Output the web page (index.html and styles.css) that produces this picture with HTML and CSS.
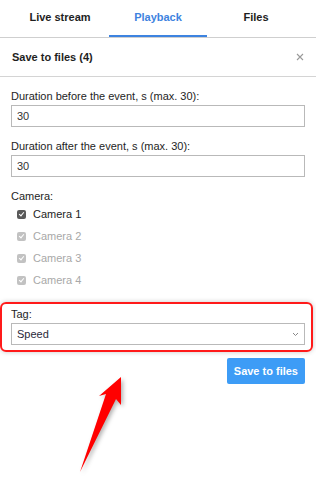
FILE: index.html
```html
<!DOCTYPE html>
<html>
    <head>
        <title>Save to files</title>
        <link rel="stylesheet" href="styles.css">
    </head>
    <body>
        <div class="tabs">
            <a class="tab">Live stream</a>
            <a class="tab tab-active">Playback</a>
            <a class="tab">Files</a>
        </div>

        <div class="panel-head">
            <span class="panel-title">Save to files (4)</span>
            <svg class="close" width="8" height="8" viewBox="0 0 8 8"><path d="M1 1L7 7M7 1L1 7" stroke="#9a9a9a" stroke-width="1.1"/></svg>
        </div>

        <div class="form">
            <div class="field">
                <label class="lbl">Duration before the event, s (max. 30):</label>
                <input class="txt" type="text" value="30">
            </div>
            <div class="field">
                <label class="lbl">Duration after the event, s (max. 30):</label>
                <input class="txt" type="text" value="30">
            </div>
            <div class="field">
                <label class="lbl">Camera:</label>
                <div class="cam"><span class="chk"></span>Camera 1</div>
                <div class="cam cam-off"><span class="chk"></span>Camera 2</div>
                <div class="cam cam-off"><span class="chk"></span>Camera 3</div>
                <div class="cam cam-off"><span class="chk"></span>Camera 4</div>
            </div>

            <div class="mark">
                <label class="lbl">Tag:</label>
                <div class="sel-wrap">
                    <select class="sel"><option>Speed</option></select>
                    <svg class="chev" width="7" height="5" viewBox="0 0 7 5"><path d="M1 1L3.5 3.5L6 1" fill="none" stroke="#888" stroke-width="1"/></svg>
                </div>
            </div>

            <div class="actions">
                <button class="save-btn">Save to files</button>
            </div>
        </div>

        <!-- annotation arrow -->
        <svg class="arrow" width="316" height="504" viewBox="0 0 316 504">
            <polygon points="121,377 121,405 116,399 80,472 106,394 99,396" fill="#ff0000"/>
        </svg>
    </body>
</html>
```

FILE: styles.css
```css
body{
    margin: 0;
    width: 316px;
    height: 504px;
    background: #fff;
    font-family: "Liberation Sans", Arial, sans-serif;
    font-size: 11px;
    color: #1e1e1e;
    position: relative;
    overflow: hidden;
}
.tabs{
    display: flex;
    padding: 0 11px;
    border-bottom: 1px solid #cfcfcf;
}
.tab{
    flex: 1;
    text-align: center;
    font-weight: bold;
    line-height: 35px;
    border-bottom: 2px solid transparent;
    color: #1e1e1e;
}
.tab-active{
    color: #3d83e0;
    border-bottom-color: #3d83e0;
}
.panel-head{
    display: flex;
    align-items: center;
    justify-content: space-between;
    height: 38px;
    padding: 0 11px 0 12px;
    border-bottom: 1px solid #d4d4d4;
}
.panel-title{
    font-weight: bold;
}
.close{
    display: block;
    margin-right: 1px;
}
.form{
    padding: 0 11px;
}
.field{
    margin-top: 12px;
}
.lbl{
    display: block;
    line-height: 14px;
    margin-bottom: 2px;
}
.txt{
    display: block;
    box-sizing: border-box;
    width: 100%;
    height: 22px;
    margin: 0;
    border: 1px solid #b9b9b9;
    padding: 0 5px;
    font-family: inherit;
    font-size: 11px;
    color: #333;
    outline: none;
}
.cam{
    display: flex;
    align-items: center;
    height: 22px;
    padding-left: 6px;
}
.cam:first-of-type{
    margin-top: -2px;
}
.chk{
    width: 9px;
    height: 9px;
    border-radius: 2px;
    background: #5a5a5a;
    margin-right: 7px;
    position: relative;
}
.chk::after{
    content: "";
    position: absolute;
    left: 3px;
    top: 1px;
    width: 2px;
    height: 4px;
    border: solid #fff;
    border-width: 0 1px 1px 0;
    transform: rotate(40deg);
}
.cam-off{
    color: #a8a8a8;
}
.cam-off .chk{
    background: #c2c2c2;
}
.mark{
    margin: 11px -8px 0 -11px;
    padding: 3px 6px 5px 9px;
    border: 2px solid #ff1a1a;
    border-radius: 6px;
    box-shadow: 0 0 5px rgba(0,0,0,0.22);
}
.sel-wrap{
    position: relative;
}
.sel{
    display: block;
    box-sizing: border-box;
    width: 100%;
    height: 22px;
    margin: 0;
    border: 1px solid #b9b9b9;
    border-radius: 0;
    background: #fff;
    padding: 0 5px;
    font-family: inherit;
    font-size: 11px;
    color: #2a2a3a;
    -webkit-appearance: none;
    appearance: none;
}
.chev{
    position: absolute;
    right: 6px;
    top: 9px;
}
.actions{
    display: flex;
    justify-content: flex-end;
    margin-top: 6px;
}
.save-btn{
    height: 26px;
    padding: 0 7px;
    border: none;
    border-radius: 2px;
    background: #3d9cf6;
    color: #fff;
    font-family: inherit;
    font-size: 11px;
    font-weight: bold;
}
.arrow{
    position: absolute;
    left: 0;
    top: 0;
    filter: drop-shadow(2px 2px 2px rgba(0,0,0,0.3));
}
```
